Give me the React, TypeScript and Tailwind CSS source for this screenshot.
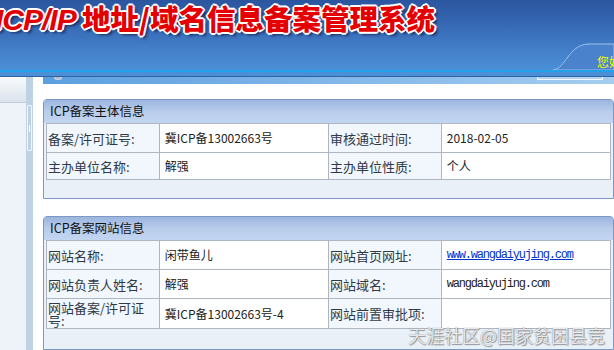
import React from 'react';

const cjk = "font-['SimSun','Noto_Sans_CJK_SC',sans-serif]";

type Cell = { label: React.ReactNode; value: React.ReactNode; top?: boolean };

const Panel: React.FC<{ title: string; rows: [Cell, Cell][]; heights: number[]; footer: number }> = ({ title, rows, heights, footer }) => (
  <div className="border border-[#7d99c3] rounded-t-[4px] bg-[#eaf0f8] w-full">
    <div className="h-[23px] px-[6px] flex items-center bg-linear-to-b from-[#9cb5df] via-[#b9cdec] to-[#c2d5f1] text-[12.5px] text-[#111]">
      {title}
    </div>
    <div className="px-[2px]">
      <table className="w-full border-collapse table-fixed text-[12px]">
        <colgroup>
          <col className="w-[20%]" />
          <col className="w-[30%]" />
          <col className="w-[20%]" />
          <col className="w-[30%]" />
        </colgroup>
        <tbody>
          {rows.map((r, i) => (
            <tr key={i} style={{ height: heights[i] }}>
              {r.map((c, j) => (
                <React.Fragment key={j}>
                  <td className="border border-[#aeb6c2] bg-[#f2f7fd] text-[#2f3a48] pl-[1px] pr-[2px] align-middle text-[13px] leading-[13px]">
                    {c.label}
                  </td>
                  <td className={`border border-[#aeb6c2] bg-white text-[#222] pl-[5px] ${c.top ? 'align-top pt-[3px]' : 'align-middle'}`}>
                    {c.value}
                  </td>
                </React.Fragment>
              ))}
            </tr>
          ))}
        </tbody>
      </table>
    </div>
    <div style={{ height: footer }} />
  </div>
);

const mono = "font-['Liberation_Mono',monospace] text-[12px] tracking-[-1.2px]";

export default function App() {
  return (
    <div className={`w-[614px] h-[350px] overflow-hidden relative bg-white flex flex-col ${cjk}`}>
      {/* header */}
      <div className="h-[70px] shrink-0 relative bg-linear-to-b from-[#2b559f] via-[#3c72bd] to-[#4c90d8] overflow-hidden">
        <svg className="absolute left-0 top-0" width="614" height="70" viewBox="0 0 614 70">
          <path d="M553 70 C 566 69, 568 45, 588 44 L 614 44 L 614 70 Z" fill="#4a82cb" stroke="#9cc1ec" strokeWidth="1" />
        </svg>
        <div className="absolute left-[-5px] top-[-2px] whitespace-nowrap leading-[40px] text-[#e40000] [text-shadow:2px_0_0_#fff,-2px_0_0_#fff,0_2px_0_#fff,0_-2px_0_#fff,1px_1px_0_#fff,-1px_-1px_0_#fff,1px_-1px_0_#fff,-1px_1px_0_#fff,3px_3px_3px_rgba(0,0,40,0.6)]">
          <span className="font-['Liberation_Sans',sans-serif] italic font-bold text-[30px] tracking-[-1px]">ICP/IP </span>
          <span className="font-['Noto_Sans_CJK_SC',sans-serif] font-black text-[28.5px]">地址/域名信息备案管理系统</span>
        </div>
        <div className="absolute left-[597px] top-[53px] text-[12px] text-[#ffff00] whitespace-nowrap">您好，欢迎使用</div>
      </div>
      <div className="h-[2px] shrink-0 bg-[#22a2e8]" />
      <div className="h-[4px] shrink-0 bg-[#4b8fd7]" />
      <div className="h-[1px] shrink-0 bg-[#2e62a3]" />

      {/* body */}
      <div className="flex flex-1 min-h-0">
        <div className="w-[26px] shrink-0 flex flex-col bg-[#eef3f9]">
          <div className="h-[26px] bg-linear-to-b from-[#f8fafc] to-[#dbe3ec] border-b border-[#c4cfdb]" />
        </div>
        <div className="w-[7px] shrink-0 bg-[#bdd2e2] pt-[28px]">
          <div className="h-[46px] mx-[1px] border border-[#f3f7fa] rounded-[1px] flex items-center justify-center">
            <div className="w-[1px] h-[7px] bg-white" />
          </div>
        </div>
        <div className="w-[10px] shrink-0" />
        <div className="flex-1 flex flex-col">
          <div className="h-[7px] shrink-0 relative bg-linear-to-r from-[#5c9fe0] to-[#a4cdf0]">
            <div className="absolute left-[11px] top-[0px] w-[8px] h-[3px] rounded-b-full border-b border-x border-[#c9d3df] bg-[#aebfd2]" />
            <div className="absolute left-[494px] top-[0px] w-[66px] h-[3px] border-b border-x border-[#f4f7fb] bg-[#b5d4f0]" />
          </div>
          <div className="h-[15px] shrink-0" />
          <Panel
            title="ICP备案主体信息"
            heights={[29, 27]}
            footer={18}
            rows={[
              [
                { label: '备案/许可证号:', value: '冀ICP备13002663号' },
                { label: '审核通过时间:', value: '2018-02-05' },
              ],
              [
                { label: '主办单位名称:', value: '解强' },
                { label: '主办单位性质:', value: '个人' },
              ],
            ]}
          />
          <div className="h-[17px] shrink-0" />
          <Panel
            title="ICP备案网站信息"
            heights={[29, 29, 30]}
            footer={20}
            rows={[
              [
                { label: '网站名称:', value: '闲带鱼儿' },
                {
                  label: '网站首页网址:',
                  top: true,
                  value: <a className={`${mono} text-[#0033cc] underline`}>www.wangdaiyujing.com</a>,
                },
              ],
              [
                { label: '网站负责人姓名:', value: '解强' },
                { label: '网站域名:', top: true, value: <span className={`${mono} text-[#222]`}>wangdaiyujing.com</span> },
              ],
              [
                { label: <>网站备案/许可证<br />号:</>, value: '冀ICP备13002663号-4' },
                { label: '网站前置审批项:', value: '' },
              ],
            ]}
          />
        </div>
      </div>

      {/* watermark */}
      <div className="absolute left-[408px] top-[322px] text-[18px] font-['Noto_Sans_CJK_SC',sans-serif] text-white/85 whitespace-nowrap [text-shadow:0_0_1px_rgba(0,0,0,0.55),1px_1px_1px_rgba(0,0,0,0.35)]">
        天涯社区@国家贫困县竞
      </div>
    </div>
  );
}
